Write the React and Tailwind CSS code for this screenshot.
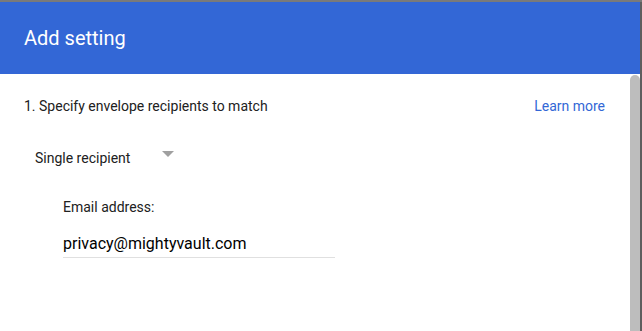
import React from 'react';

export default function App() {
	return (
		<div className="w-[642px] h-[331px] bg-[#6e6e6e] flex flex-col overflow-hidden font-['Roboto',sans-serif]">
			<div className="h-[2px] bg-[#7a7a7a]" />
			<div className="flex flex-1 min-h-0">
				<div className="w-[640px] flex flex-col">
					<div className="h-[72px] bg-[#3367d6] flex items-center px-6 text-white text-[20px]">
						Add setting
					</div>
					<div className="flex flex-1 min-h-0 bg-white">
						<div className="flex-1 flex flex-col pt-[22px] text-[14px] leading-5 text-[#212121]">
							<div className="flex items-center justify-between pl-6 pr-[25px]">
								<span>1. Specify envelope recipients to match</span>
								<a className="text-[#3367d6] cursor-pointer">Learn more</a>
							</div>
							<div className="flex items-center mt-8 pl-[35px]">
								<span>Single recipient</span>
								<span className="ml-[32px] -mt-[9px] w-0 h-0 border-l-[6px] border-r-[6px] border-t-[6px] border-l-transparent border-r-transparent border-t-[#a0a0a0]" />
							</div>
							<div className="mt-[29px] pl-[63px] flex flex-col">
								<span>Email address:</span>
								<div className="mt-[15px] w-[272px] pb-px border-b border-[#e0e0e0] text-[16px] leading-6 text-black">
									privacy@mightyvault.com
								</div>
							</div>
						</div>
						<div className="w-[10px] bg-[#bdbdbd] rounded-t-[5px] mt-[1px]" />
					</div>
				</div>
				<div className="w-[2px] bg-[#5e5e5e]" />
			</div>
		</div>
	);
}
